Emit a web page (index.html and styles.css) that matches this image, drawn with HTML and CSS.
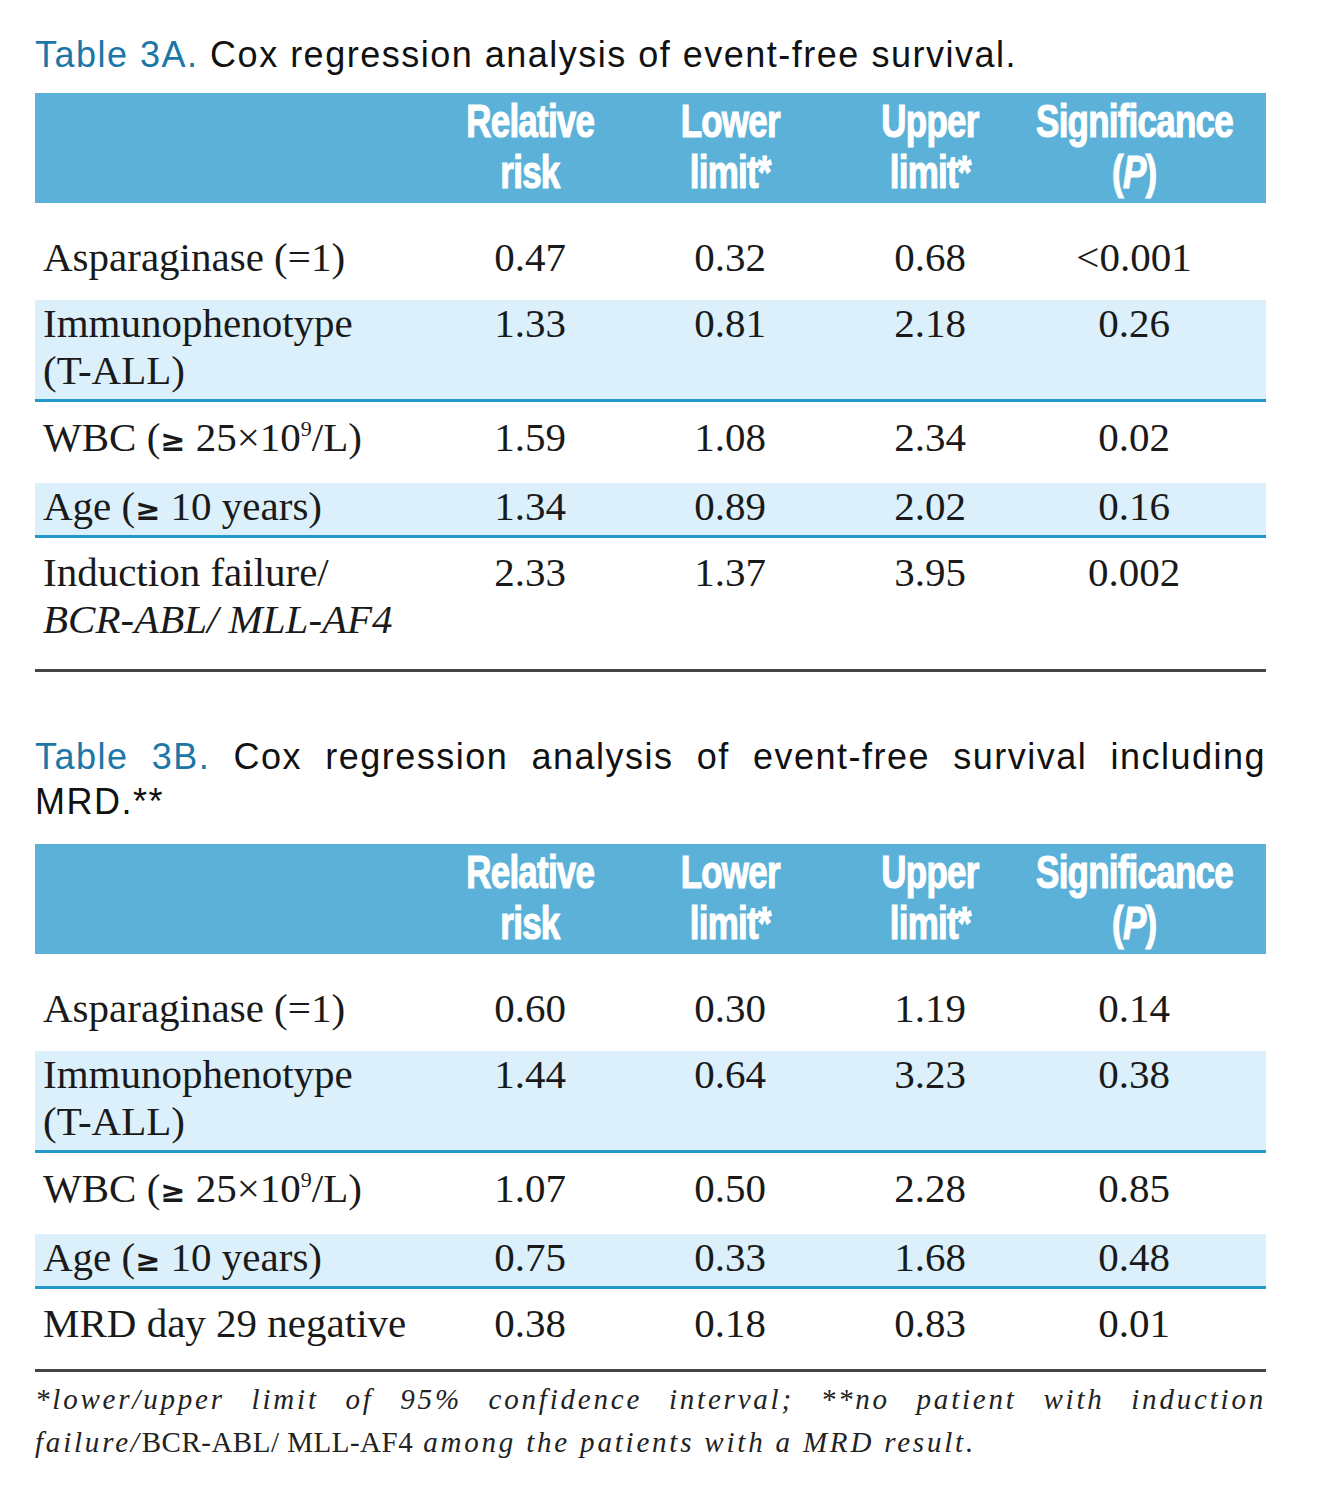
FILE: index.html
```html
<!DOCTYPE html>
<html lang="en">
<head>
<meta charset="utf-8">
<title>Table 3A / 3B</title>
<link rel="stylesheet" href="styles.css">
</head>
<body>
<main class="page">
  <h2 class="title title-a"><span class="tag">Table 3A.</span> Cox regression analysis of event-free survival.</h2>
  <table class="cox">
    <colgroup>
      <col class="c-label"><col class="c-num"><col class="c-num"><col class="c-num"><col class="c-last">
    </colgroup>
    <thead>
      <tr>
        <th></th>
        <th><div class="hd"><span>Relative</span><span>risk</span></div></th>
        <th><div class="hd"><span>Lower</span><span>limit*</span></div></th>
        <th><div class="hd"><span>Upper</span><span>limit*</span></div></th>
        <th class="last"><div class="hd"><span>Significance</span><span>(<i>P</i>)</span></div></th>
      </tr>
    </thead>
    <tbody>
      <tr class="r-first">
        <td class="label">Asparaginase (=1)</td><td>0.47</td><td>0.32</td><td>0.68</td><td class="last">&lt;0.001</td>
      </tr>
      <tr class="r-shade r-two">
        <td class="label">Immunophenotype<br>(T-ALL)</td><td>1.33</td><td>0.81</td><td>2.18</td><td class="last">0.26</td>
      </tr>
      <tr class="r-plain">
        <td class="label">WBC (<b class="ge">≥</b> 25×10<sup>9</sup>/L)</td><td>1.59</td><td>1.08</td><td>2.34</td><td class="last">0.02</td>
      </tr>
      <tr class="r-shade r-one">
        <td class="label">Age (<b class="ge">≥</b> 10 years)</td><td>1.34</td><td>0.89</td><td>2.02</td><td class="last">0.16</td>
      </tr>
      <tr class="r-end r-end-two">
        <td class="label">Induction failure/<br><i>BCR-ABL/ MLL-AF4</i></td><td>2.33</td><td>1.37</td><td>3.95</td><td class="last">0.002</td>
      </tr>
    </tbody>
  </table>

  <h2 class="title title-b"><span class="just"><span class="tag">Table 3B.</span> Cox regression analysis of event-free survival including</span>MRD.**</h2>
  <table class="cox">
    <colgroup>
      <col class="c-label"><col class="c-num"><col class="c-num"><col class="c-num"><col class="c-last">
    </colgroup>
    <thead>
      <tr>
        <th></th>
        <th><div class="hd"><span>Relative</span><span>risk</span></div></th>
        <th><div class="hd"><span>Lower</span><span>limit*</span></div></th>
        <th><div class="hd"><span>Upper</span><span>limit*</span></div></th>
        <th class="last"><div class="hd"><span>Significance</span><span>(<i>P</i>)</span></div></th>
      </tr>
    </thead>
    <tbody>
      <tr class="r-first">
        <td class="label">Asparaginase (=1)</td><td>0.60</td><td>0.30</td><td>1.19</td><td class="last">0.14</td>
      </tr>
      <tr class="r-shade r-two">
        <td class="label">Immunophenotype<br>(T-ALL)</td><td>1.44</td><td>0.64</td><td>3.23</td><td class="last">0.38</td>
      </tr>
      <tr class="r-plain">
        <td class="label">WBC (<b class="ge">≥</b> 25×10<sup>9</sup>/L)</td><td>1.07</td><td>0.50</td><td>2.28</td><td class="last">0.85</td>
      </tr>
      <tr class="r-shade r-one">
        <td class="label">Age (<b class="ge">≥</b> 10 years)</td><td>0.75</td><td>0.33</td><td>1.68</td><td class="last">0.48</td>
      </tr>
      <tr class="r-end r-end-one">
        <td class="label">MRD day 29 negative</td><td>0.38</td><td>0.18</td><td>0.83</td><td class="last">0.01</td>
      </tr>
    </tbody>
  </table>

  <p class="foot"><span class="just">*lower/upper limit of 95% confidence interval; **no patient with induction</span>failure/<span class="up">BCR-ABL/ MLL-AF4</span> among the patients with a MRD result.</p>
</main>
</body>
</html>
```

FILE: styles.css
```css
html, body {
  margin: 0;
  padding: 0;
  background: #ffffff;
}

.page {
  width: 1231px;
  padding: 32px 0 0 35px;
}

.title {
  margin: 0 0 20px 0;
  font-family: "Liberation Sans", Arial, sans-serif;
  font-weight: normal;
  font-size: 36px;
  line-height: 45px;
  letter-spacing: 1.5px;
  color: #111111;
}

.title-a {
  margin-bottom: 16px;
}

.title .tag {
  color: #1c76a8;
}

.title-b {
  margin-top: 62px;
}

.just {
  display: block;
  text-align: justify;
  text-align-last: justify;
}

.cox {
  width: 1231px;
  table-layout: fixed;
  border-collapse: separate;
  border-spacing: 0;
  font-family: "Liberation Serif", "Times New Roman", serif;
  font-size: 41px;
  line-height: 47px;
  color: #1a1a1a;
}

.c-label { width: 395px; }
.c-num { width: 200px; }
.c-last { width: 236px; }

.cox thead tr {
  background: #5bb1d8;
}

.cox th {
  padding: 3px 0 5px 0;
  vertical-align: top;
}

.hd {
  display: flex;
  flex-direction: column;
  align-items: center;
  font-family: "Liberation Sans", Arial, sans-serif;
  font-weight: bold;
  font-size: 46px;
  line-height: 51px;
  color: #ffffff;
  letter-spacing: -1px;
  -webkit-text-stroke: 1.2px #ffffff;
}

.hd span {
  display: block;
  white-space: nowrap;
  transform: scaleX(0.76);
  transform-origin: center;
}

.cox td {
  text-align: center;
  vertical-align: top;
  padding: 0;
}

.cox .last {
  padding-right: 28px;
}

.cox td.label {
  text-align: left;
  padding-left: 8px;
  white-space: nowrap;
}

.ge {
  font-family: "DejaVu Sans", sans-serif;
  font-weight: bold;
  font-size: 30px;
  line-height: 0;
}

.cox sup {
  font-size: 22px;
  line-height: 0;
  vertical-align: 15px;
}

.r-shade {
  background: #dbf0fb;
}

.r-shade td {
  border-bottom: 3px solid #2298cb;
}

.r-first td { padding-top: 31px; padding-bottom: 19px; }
.r-two td { padding-top: 0; padding-bottom: 5px; }
.r-plain td { padding-top: 12px; padding-bottom: 22px; }
.r-one td { padding-top: 0; padding-bottom: 5px; }
.r-end td { padding-top: 11px; border-bottom: 3px solid #454545; }
.r-end-two td { padding-bottom: 26px; }
.r-end-one td { padding-bottom: 22px; }

.foot {
  margin: 6px 0 0 0;
  font-family: "Liberation Serif", "Times New Roman", serif;
  font-style: italic;
  font-size: 29px;
  line-height: 43px;
  letter-spacing: 2.8px;
  color: #222222;
}

.foot .up {
  font-style: normal;
  letter-spacing: 0.5px;
}
```
